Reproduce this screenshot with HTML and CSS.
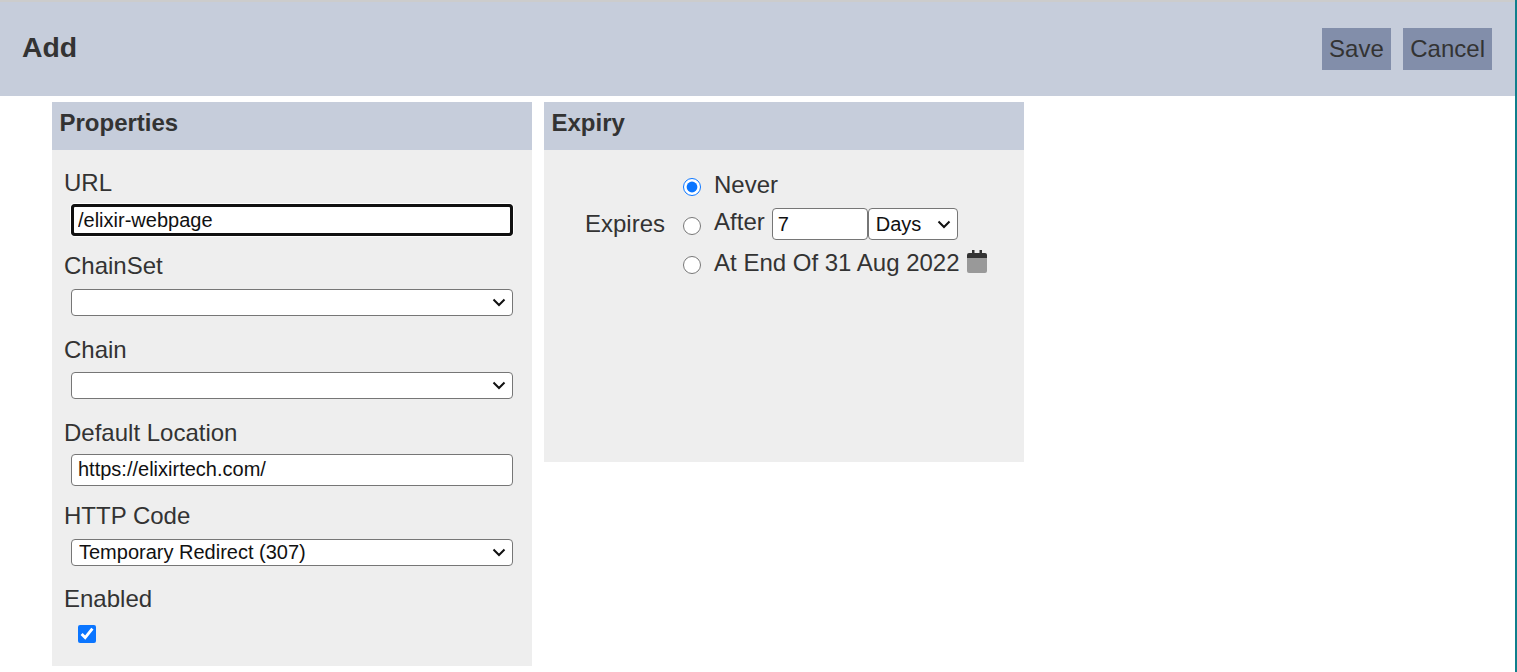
FILE: index.html
```html
<!DOCTYPE html>
<html lang="en">
<head>
<meta charset="utf-8">
<title>Add</title>
<link rel="stylesheet" href="styles.css">
</head>
<body>
<div class="page">
  <header class="topbar">
    <h1 class="title">Add</h1>
    <div class="actions">
      <button class="btn" type="button">Save</button>
      <button class="btn" type="button">Cancel</button>
    </div>
  </header>
  <main class="panels">
    <section class="panel panel-props">
      <h2 class="panel-head">Properties</h2>
      <div class="props-body">
        <label class="field-label">URL</label>
        <input class="ctl ctl-text ctl-focus" type="text" value="/elixir-webpage">
        <label class="field-label">ChainSet</label>
        <select class="ctl ctl-select"><option></option></select>
        <label class="field-label">Chain</label>
        <select class="ctl ctl-select"><option></option></select>
        <label class="field-label">Default Location</label>
        <input class="ctl ctl-text" type="text" value="https://elixirtech.com/">
        <label class="field-label">HTTP Code</label>
        <select class="ctl ctl-select"><option>Temporary Redirect (307)</option></select>
        <label class="field-label">Enabled</label>
        <input class="check" type="checkbox" checked>
      </div>
    </section>
    <section class="panel panel-expiry">
      <h2 class="panel-head">Expiry</h2>
      <div class="expiry-body">
        <span class="expires-label">Expires</span>
        <div class="options">
          <div class="option">
            <input class="radio" type="radio" name="exp" checked>
            <span class="opt-text">Never</span>
          </div>
          <div class="option option-after">
            <input class="radio" type="radio" name="exp">
            <span class="opt-text">After</span>
            <input class="ctl num" type="text" value="7">
            <select class="ctl unit"><option>Days</option></select>
          </div>
          <div class="option option-end">
            <input class="radio" type="radio" name="exp">
            <span class="opt-text">At End Of 31 Aug 2022</span>
            <svg class="cal" viewBox="0 0 20 23" aria-hidden="true">
              <path class="cal-top" d="M5 0h2.500v3h5V0H15v3h3a2 2 0 0 1 2 2v3H0V5a2 2 0 0 1 2-2h3z"/>
              <path class="cal-bottom" d="M0 8h20v13a2 2 0 0 1-2 2H2a2 2 0 0 1-2-2z"/>
            </svg>
          </div>
        </div>
      </div>
    </section>
  </main>
</div>
</body>
</html>
```
FILE: styles.css
```css
* { box-sizing: border-box; }
html, body { margin: 0; height: 100%; background: #fff; overflow: hidden; }
body { font-family: "Liberation Sans", Arial, sans-serif; color: #333; }
.page { height: 672px; border-right: 2px solid #0f7f8c; }

.topbar {
  height: 96px;
  background: #c6cddb;
  border-top: 2px solid #cccccc;
  display: flex;
  align-items: center;
  justify-content: space-between;
  padding: 0 23px 2px 22px;
}
.title { margin: -2px 0 0; font-size: 28.4px; font-weight: 700; line-height: 32px; }
.actions { display: flex; gap: 12px; padding-top: 2px; }
.btn {
  height: 42px;
  padding: 0 7px 0 7.500px;
  border: 0;
  border-radius: 0;
  background: #828eaa;
  color: #333;
  font: 24px "Liberation Sans", Arial, sans-serif;
}

.panels { display: flex; align-items: flex-start; gap: 12px; padding: 6px 0 0 52px; }
.panel { width: 480px; background: #eeeeee; }
.panel-head {
  margin: 0;
  height: 48px;
  padding: 7px 8px 0 7.500px;
  background: #c6cddb;
  font-size: 24px;
  font-weight: 700;
  line-height: 28px;
}
.panel-props { height: 564px; }
.panel-expiry { height: 360px; }

.props-body { display: flex; flex-direction: column; align-items: flex-start; padding: 18px 19px 0 12px; }
.field-label { display: block; font-size: 24px; line-height: 30px; height: 29.250px; }
.ctl {
  font: 20px "Liberation Sans", Arial, sans-serif;
  color: #111;
  background-color: #fff;
  border: 1px solid #767676;
  border-radius: 4px;
  margin: 0;
  outline: 0;
}
select.ctl {
  appearance: none;
  background-image: url("data:image/svg+xml,%3Csvg xmlns='http://www.w3.org/2000/svg' width='14' height='9' viewBox='0 0 14 9'%3E%3Cpath d='M1.500 1.500 7 7l5.500-5.500' fill='none' stroke='%23111' stroke-width='2'/%3E%3C/svg%3E");
  background-repeat: no-repeat;
  background-position: right 6px center;
}
.ctl-text { display: block; width: 442px; height: 32px; margin: 6.500px 0 15.500px 7px; padding: 0 6px; }
.ctl-focus { padding-top: 2px; outline: 3px solid #101010; outline-offset: -3px; box-shadow: 0 0 0 1px #fff; }
.ctl-select { display: block; width: 442px; height: 27px; margin: 8.250px 0 18.750px 7px; padding: 0 7px; }
.check { display: block; width: 18px; height: 18px; margin: 11px 0 0 14px; accent-color: #0a75ff; }

.expiry-body { display: flex; align-items: flex-start; padding: 17px 0 0 41px; }
.expires-label { font-size: 24px; line-height: 30px; margin: 42px 18px 0 0; }
.options { display: flex; flex-direction: column; }
.option { display: flex; align-items: center; height: 38px; }
.option-end { height: 42px; }
.radio { width: 18px; height: 18px; margin: 2px 13px 0 0; accent-color: #0a75ff; flex: none; }
.opt-text { font-size: 24px; line-height: 30px; margin-top: -3px; white-space: nowrap; }
.option-after .radio { margin-top: 4px; }
.option-after .opt-text { margin-top: -4px; }
.option-end .opt-text { margin-top: -3px; }
.num { width: 96px; height: 32px; margin-left: 7px; padding: 0 5px; }
.unit { width: 90px; height: 32px; padding: 0 7px; }
.cal { width: 20px; height: 23px; margin: -6px 0 0 7px; flex: none; }
.cal-top { fill: #333; }
.cal-bottom { fill: #999; }
```
